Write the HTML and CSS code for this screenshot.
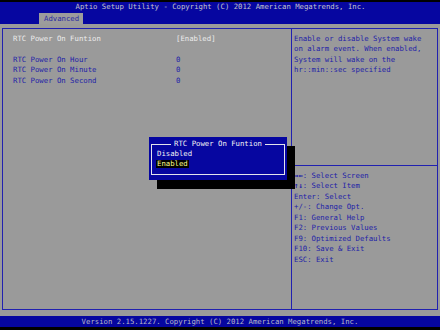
FILE: index.html
```html
<!DOCTYPE html>
<html lang="en">
<head>
  <meta charset="UTF-8" />
  <title>Aptio Setup Utility</title>
  <link rel="stylesheet" href="styles.css">
</head>
<body>
  <div class="screen">
    <header class="top">
      <div class="title">Aptio Setup Utility - Copyright (C) 2012 American Megatrends, Inc.</div>
      <div class="tabs"><span class="tab">Advanced</span></div>
    </header>

    <main class="body">
      <div class="frame">
        <section class="items">
          <div class="row current"><span class="label">RTC Power On Funtion</span><span class="value">[Enabled]</span></div>
          <div class="row blank"></div>
          <div class="row"><span class="label">RTC Power On Hour</span><span class="value">0</span></div>
          <div class="row"><span class="label">RTC Power On Minute</span><span class="value">0</span></div>
          <div class="row"><span class="label">RTC Power On Second</span><span class="value">0</span></div>
        </section>

        <aside class="side">
          <div class="help">
            Enable or disable System wake<br>
            on alarm event. When enabled,<br>
            System will wake on the<br>
            hr::min::sec specified
          </div>
          <div class="keys">
            <div><b>→←</b>: Select Screen</div>
            <div><b>↑↓</b>: Select Item</div>
            <div>Enter: Select</div>
            <div>+/-: Change Opt.</div>
            <div>F1: General Help</div>
            <div>F2: Previous Values</div>
            <div>F9: Optimized Defaults</div>
            <div>F10: Save &amp; Exit</div>
            <div>ESC: Exit</div>
          </div>
        </aside>
      </div>

      <div class="popup">
        <div class="popup-frame">
          <div class="popup-title">RTC Power On Funtion</div>
          <div class="opt">Disabled</div>
          <div class="opt"><span class="sel">Enabled</span></div>
        </div>
      </div>
    </main>

    <footer class="bottom">Version 2.15.1227. Copyright (C) 2012 American Megatrends, Inc.</footer>
  </div>
</body>
</html>
```

FILE: styles.css
```css
body {
  margin: 0;
  background: #000;
  font-family: "DejaVu Sans Mono", "Liberation Mono", monospace;
  font-size: 7.3px;
  line-height: 10.45px;
}
.screen {
  width: 440px;
  height: 330px;
  padding-top: 2px;
  box-sizing: border-box;
}
.top {
  background: #0606a0;
  height: 22px;
  color: #c4c4cc;
}
.title {
  text-align: center;
  height: 11px;
  padding-left: 1px;
}
.tabs {
  height: 11px;
  padding-left: 39px;
}
.tab {
  display: inline-block;
  width: 44px;
  height: 11px;
  line-height: 11px;
  padding-left: 5px;
  box-sizing: border-box;
  background: #9c9c9c;
  color: #2a2aa0;
}
.body {
  position: relative;
  background: #9a9a9a;
  height: 292px;
  padding: 4px 2px 6px 2px;
  box-sizing: border-box;
  color: #2222a8;
}
.frame {
  display: flex;
  height: 100%;
  border: 1px solid #2020b0;
  box-sizing: border-box;
}
.items {
  width: 289px;
  border-right: 1px solid #2020b0;
  padding: 5px 0 0 10px;
  box-sizing: border-box;
}
.row {
  display: flex;
  height: 10.45px;
}
.label {
  width: 163px;
}
.current {
  color: #ececec;
}
.side {
  flex: 1;
  display: flex;
  flex-direction: column;
}
.help {
  height: 137px;
  padding: 5px 0 0 2px;
  border-bottom: 1px solid #2020b0;
  box-sizing: border-box;
}
.keys {
  padding: 5px 0 0 2px;
}
.keys b {
  font-weight: bold;
}
.popup {
  position: absolute;
  left: 149px;
  top: 113px;
  width: 138px;
  height: 43px;
  background: #0606a0;
  padding: 7px 2px 5px 2px;
  box-sizing: border-box;
  box-shadow: 8px 9px 0 #000;
}
.popup-frame {
  position: relative;
  height: 100%;
  border: 1px solid #e4e4ec;
  box-sizing: border-box;
  padding: 4px 5px 0 5px;
  color: #f4f4f4;
}
.popup-title {
  position: absolute;
  top: -6px;
  left: 0;
  right: 0;
  width: max-content;
  margin: 0 auto;
  padding: 0 3px;
  background: #0606a0;
}
.opt {
  height: 10.45px;
}
.sel {
  display: inline-block;
  background: #000;
  color: #ffff8a;
  line-height: 7.5px;
  padding: 0 1px 0 0;
  margin-left: -1px;
  padding-left: 1px;
}
.bottom {
  background: #0606a0;
  color: #b8b8c8;
  height: 11px;
  line-height: 11px;
  text-align: center;
}
```
